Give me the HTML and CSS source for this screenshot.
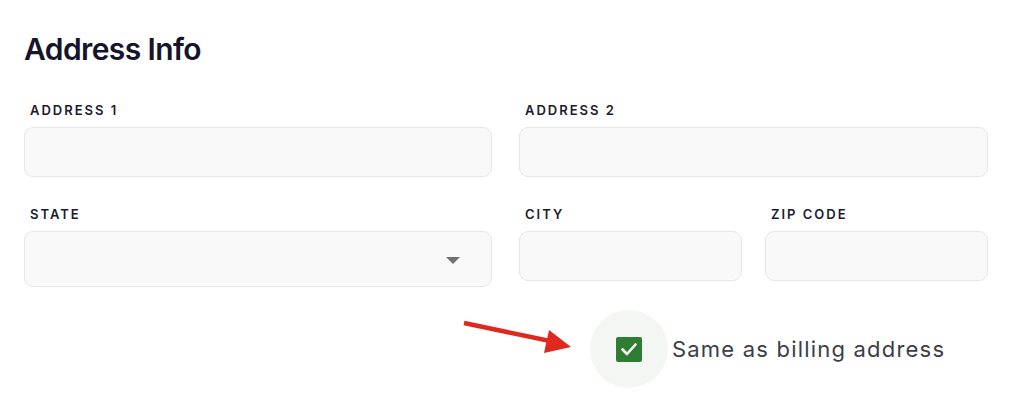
FILE: index.html
```html
<!DOCTYPE html>
<html lang="en">
<head>
<meta charset="utf-8">
<title>Address Info</title>
<link rel="stylesheet" href="styles.css">
</head>
<body>
<main class="card">
  <h2 class="title">Address Info</h2>
  <div class="grid">
    <div class="field">
      <label class="label">ADDRESS 1</label>
      <div class="input"></div>
    </div>
    <div class="field">
      <label class="label">ADDRESS 2</label>
      <div class="input"></div>
    </div>
    <div class="field">
      <label class="label">STATE</label>
      <div class="input select">
        <svg class="caret" width="14" height="7" viewBox="0 0 14 7"><path d="M0 0 H14 L7 7 Z" fill="#717171"/></svg>
      </div>
    </div>
    <div class="pair">
      <div class="field">
        <label class="label">CITY</label>
        <div class="input"></div>
      </div>
      <div class="field">
        <label class="label">ZIP CODE</label>
        <div class="input"></div>
      </div>
    </div>
  </div>
  <div class="check-row">
    <svg class="arrow" width="120" height="40" viewBox="0 0 120 40">
      <line x1="2" y1="3" x2="88" y2="21" stroke="#e0281e" stroke-width="4.5" stroke-linecap="butt"/>
      <path d="M109 27 L87 10 L82 33 Z" fill="#e0281e"/>
    </svg>
    <span class="ripple">
      <span class="box">
        <svg width="22" height="22" viewBox="0 0 22 22"><path d="M4.5 11.5 L9 16 L17.5 6.5" fill="none" stroke="#fff" stroke-width="2.6" stroke-linecap="round" stroke-linejoin="round"/></svg>
      </span>
    </span>
    <span class="check-label">Same as billing address</span>
  </div>
</main>
</body>
</html>
```
FILE: styles.css
```css
* { box-sizing: border-box; }
html, body { margin: 0; background: #ffffff; }
body {
  font-family: Inter, "Noto Sans", "Liberation Sans", sans-serif;
  width: 1016px;
  height: 404px;
  overflow: hidden;
}
.card {
  padding: 31px 28px 0 24px;
}
.title {
  margin: 0;
  font-size: 30px;
  line-height: 36px;
  font-weight: 600;
  color: #14142b;
  letter-spacing: -0.6px;
}
.grid {
  margin-top: 35px;
  display: grid;
  grid-template-columns: 468px 469px;
  column-gap: 27px;
  row-gap: 29px;
}
.pair {
  display: grid;
  grid-template-columns: 223px 223px;
  column-gap: 23px;
}
.field {
  display: flex;
  flex-direction: column;
  gap: 9px;
}
.label {
  padding-left: 6px;
  font-size: 13px;
  line-height: 16px;
  font-weight: 600;
  letter-spacing: 2px;
  color: #1b1b30;
}
.input {
  height: 50px;
  background: #f9f9f9;
  border: 1px solid #e6e6e6;
  border-radius: 9px;
}
.select {
  height: 56px;
  display: flex;
  align-items: center;
  justify-content: flex-end;
  padding-right: 31px;
  padding-top: 3px;
}
.caret { display: block; }
.check-row {
  position: relative;
  margin-top: 23px;
  margin-left: 566px;
  display: flex;
  align-items: center;
  gap: 4px;
}
.arrow {
  position: absolute;
  left: -128px;
  top: 10px;
}
.ripple {
  width: 78px;
  height: 78px;
  border-radius: 50%;
  background: #f4f6f3;
  display: flex;
  align-items: center;
  justify-content: center;
}
.box {
  width: 26px;
  height: 25px;
  border-radius: 2px;
  background: #2e7d32;
  display: flex;
  align-items: center;
  justify-content: center;
}
.box svg { display: block; }
.check-label {
  font-size: 22px;
  line-height: 28px;
  color: #3b3e48;
  letter-spacing: 1.2px;
}
```
